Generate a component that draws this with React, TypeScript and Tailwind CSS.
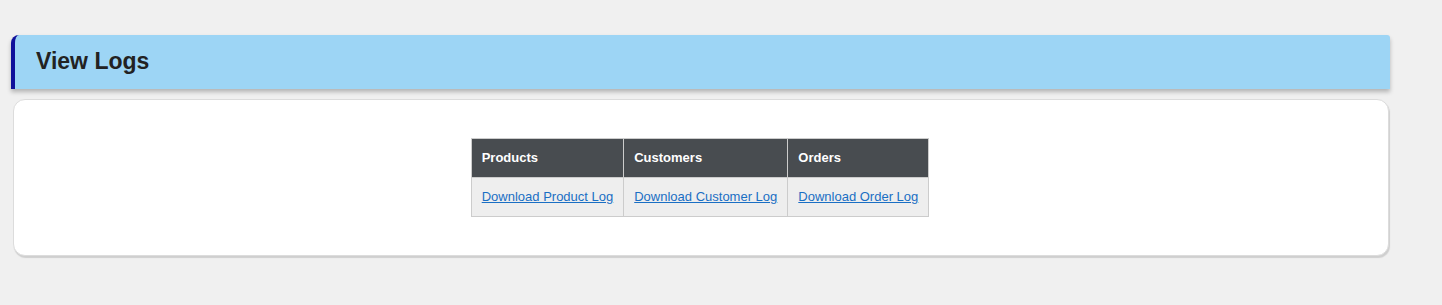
import React from "react";

const logs = [
  { title: "Products", link: "Download Product Log" },
  { title: "Customers", link: "Download Customer Log" },
  { title: "Orders", link: "Download Order Log" },
];

const App = () => {
  return (
    <div className="min-h-[305px] bg-[#f0f0f0] pt-[35px] font-['Liberation_Sans',Arial,sans-serif]">
      <div className="ml-[11px] w-[1379px] h-[54px] flex items-center pb-[2px] bg-[#9dd5f5] border-l-4 border-[#10109a] rounded-tl-[8px] rounded-tr-[3px] shadow-[0_3px_4px_rgba(0,0,0,0.25)]">
        <h1 className="pl-[21px] text-[23px] leading-none font-bold text-[#222]">View Logs</h1>
      </div>
      <div className="ml-[13px] mt-[10px] w-[1376px] h-[157px] bg-white border border-[#dcdcdc] rounded-[12px] shadow-[1px_2px_1px_#cfcfcf] flex justify-center pt-[38px]">
        <table className="border-collapse h-[78px] text-[13px] -translate-x-[1px]">
          <thead>
            <tr>
              {logs.map((item) => (
                <th
                  key={item.title}
                  className="h-[39px] px-[10px] text-left font-bold text-white bg-[#484c50] border border-[#cccccc]"
                >
                  {item.title}
                </th>
              ))}
            </tr>
          </thead>
          <tbody>
            <tr>
              {logs.map((item) => (
                <td
                  key={item.link}
                  className="h-[39px] px-[10px] bg-[#eeeeee] border border-[#cccccc]"
                >
                  <a href="#" className="text-[#1a6fc4] underline">
                    {item.link}
                  </a>
                </td>
              ))}
            </tr>
          </tbody>
        </table>
      </div>
    </div>
  );
};

export default App;
